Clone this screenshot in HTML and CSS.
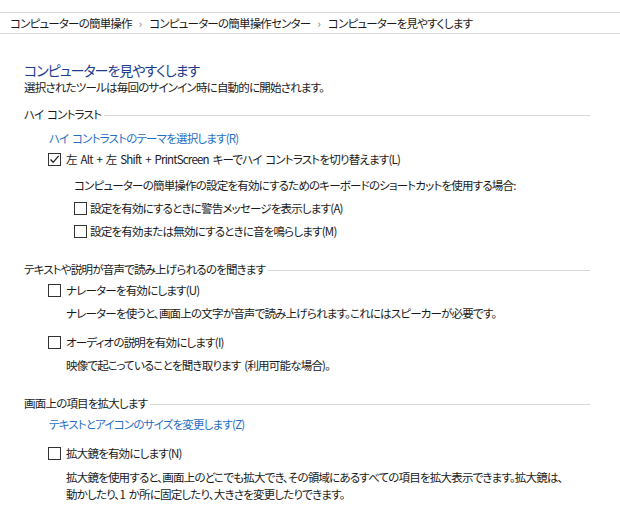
FILE: index.html
```html
<!DOCTYPE html>
<html lang="ja">
<head>
  <meta charset="UTF-8">
  <title>コンピューターを見やすくします</title>
  <link rel="stylesheet" href="styles.css">
</head>
<body>
  <!-- Address bar -->
  <div class="breadcrumb">
    <span class="crumb">コンピューターの簡単操作</span>
    <span class="crumb-sep">›</span>
    <span class="crumb">コンピューターの簡単操作センター</span>
    <span class="crumb-sep">›</span>
    <span class="crumb">コンピューターを見やすくします</span>
  </div>

  <div class="page">
    <h1 class="page-title">コンピューターを見やすくします</h1>
    <p class="page-subtitle">選択されたツールは毎回のサインイン時に自動的に開始されます。</p>

    <!-- High contrast -->
    <div class="group-header">ハイ コントラスト</div>
    <a class="task-link link-first">ハイ コントラストのテーマを選択します(R)</a>
    <label class="option option-a">
      <span class="checkbox">
        <svg width="11" height="11" viewBox="0 0 11 11"><path d="M1.5 5.5 L4.2 8.3 L9.6 1.8" fill="none" stroke="#222" stroke-width="1.3"/></svg>
      </span>
      <span>左 Alt + 左 Shift + PrintScreen キーでハイ コントラストを切り替えます(L)</span>
    </label>
    <p class="sub-note">コンピューターの簡単操作の設定を有効にするためのキーボードのショートカットを使用する場合:</p>
    <label class="option sub-option">
      <span class="checkbox"></span>
      <span>設定を有効にするときに警告メッセージを表示します(A)</span>
    </label>
    <label class="option sub-option">
      <span class="checkbox"></span>
      <span>設定を有効または無効にするときに音を鳴らします(M)</span>
    </label>

    <!-- Narrator -->
    <div class="group-header group-gap">テキストや説明が音声で読み上げられるのを聞きます</div>
    <label class="option option-a">
      <span class="checkbox"></span>
      <span>ナレーターを有効にします(U)</span>
    </label>
    <p class="description">ナレーターを使うと、画面上の文字が音声で読み上げられます。これにはスピーカーが必要です。</p>
    <label class="option option-b">
      <span class="checkbox"></span>
      <span>オーディオの説明を有効にします(I)</span>
    </label>
    <p class="description">映像で起こっていることを聞き取ります (利用可能な場合)。</p>

    <!-- Magnifier -->
    <div class="group-header group-gap">画面上の項目を拡大します</div>
    <a class="task-link link-tight">テキストとアイコンのサイズを変更します(Z)</a>
    <label class="option option-b">
      <span class="checkbox"></span>
      <span>拡大鏡を有効にします(N)</span>
    </label>
    <p class="description">拡大鏡を使用すると、画面上のどこでも拡大でき、その領域にあるすべての項目を拡大表示できます。拡大鏡は、動かしたり、1 か所に固定したり、大きさを変更したりできます。</p>
  </div>
</body>
</html>
```

FILE: styles.css
```css
* {
  margin: 0;
  padding: 0;
  box-sizing: border-box;
}

body {
  font-family: "Noto Sans CJK JP", "Noto Sans", sans-serif;
  font-feature-settings: "palt";
  font-size: 11.5px;
  letter-spacing: -0.8px;
  word-spacing: 2px;
  line-height: 17px;
  color: #1a1a1a;
  background: #ffffff;
  overflow: hidden;
}

.breadcrumb {
  margin-top: 12px;
  height: 22px;
  border-top: 1px solid #d9d9d9;
  border-bottom: 1px solid #d9d9d9;
  padding-left: 10px;
  display: flex;
  align-items: center;
  line-height: 20px;
}

.crumb {
  color: #1a1a1a;
}

.crumb-sep {
  color: #7a7a7a;
  font-size: 11px;
  margin: 0 8px 0 7px;
}

.page {
  padding: 0 30px 0 24px;
}

.page-title {
  margin-top: 27px;
  font-size: 14px;
  letter-spacing: -1px;
  font-weight: normal;
  line-height: 18px;
  color: #1e3c8f;
}

.page-subtitle {
  color: #1a1a1a;
}

.group-header {
  margin-top: 10px;
  display: flex;
  align-items: center;
}

.group-header::after {
  content: "";
  flex: 1;
  border-top: 1px solid #d8d8d8;
  margin-left: 3px;
  margin-top: 2px;
}

.group-gap {
  margin-top: 21px;
}

.group-gap + .task-link {
  margin-top: 4px;
}

.task-link {
  display: block;
  margin-left: 25px;
  color: #1f6fc6;
  cursor: pointer;
}

.link-first {
  margin-top: 7px;
}

.option {
  display: flex;
  align-items: center;
  gap: 5px;
  margin-left: 24px;
}

.option-a {
  margin-top: 4px;
}

.option-b {
  margin-top: 12px;
}

.sub-option {
  margin-left: 50px;
  margin-top: 6px;
  gap: 3px;
}

.checkbox {
  width: 13px;
  height: 13px;
  border: 1px solid #333333;
  background: #ffffff;
  display: flex;
  align-items: center;
  justify-content: center;
  flex-shrink: 0;
}

.sub-note {
  margin-left: 50px;
  margin-top: 9px;
}

.description {
  margin-left: 42px;
  margin-top: 6px;
  max-width: 503px;
}

.option-b + .description:last-child {
  margin-top: 7px;
}
```
